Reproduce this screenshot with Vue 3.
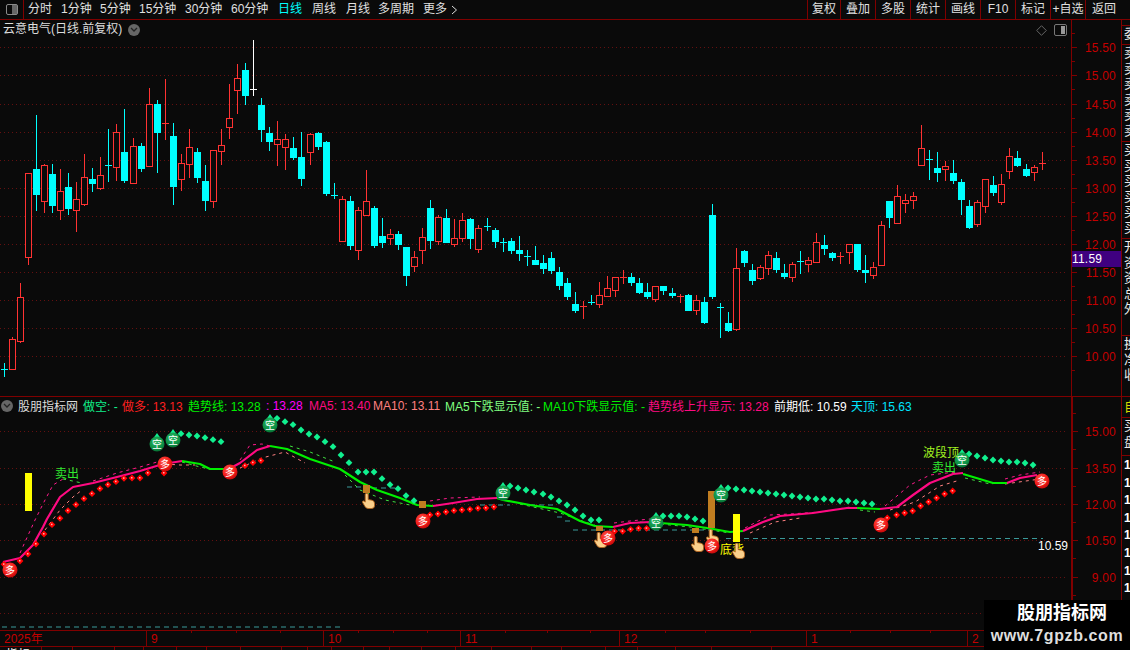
<script setup>
const navItems = [['分时',33],['1分钟',39],['5分钟',39],['15分钟',46],['30分钟',46],['60分钟',47],['日线',34],['周线',34],['月线',32],['多周期',45],['更多',28]]
const toolItems = [['复权',33],['叠加',35],['多股',35],['统计',35],['画线',35],['F10',35],['标记',35],['+自选',35],['返回',37]]

const rawA = `c 1000 1018 1022 1040|r 922 926 1018 1018|r 760 802 934 940|r 430 430 682 706|c 256 418 494 542|r 402 406 514 548|c 402 432 527 548|r 418 482 541 569|c 430 472 536 554|r 456 506 541 605|r 372 442 521 527|c 414 448 461 485|r 381 434 475 479|c 297 406 410 455|r 282 305 412 452|c 237 367 452 458|r 324 349 460 460|c 340 349 416 425|r 174 223 409 409|c 210 223 308 428|r 147 279 281 329|c 279 319 470 524|r 373 400 448 482|r 297 352 403 443|c 354 367 443 458|c 405 454 512 542|r 361 361 514 533|r 297 346 364 404|r 162 265 292 326|r 102 145 181 251|c 99 121 197 224|w 30 178 180 197|c 204 226 299 335|c 291 310 335 362|r 273 328 343 407|r 312 328 350 419|c 321 355 384 390|c 306 382 446 467|r 310 313 365 404|c 306 310 350 359|c 333 337 491 497|c 459 496 499 506|r 499 508 632 632|c 499 514 647 659|r 532 541 661 689|r 420 514 556 556|c 529 535 647 653`
const rawB = `c 144 198 218 233|r 178 193 205 224|c 184 193 224 239|c 231 231 317 347|r 243 262 287 305|r 175 202 241 281|c 90 114 212 236|r 136 142 214 224|c 117 145 218 218|r 147 205 223 230|r 130 151 205 215|c 145 148 206 236|r 166 175 238 248|c 144 168 170 182|c 175 181 215 233|c 205 216 218 245|c 205 214 242 251|c 198 240 251 272|c 240 258 260 287|c 228 271 284 284|c 255 280 296 311|c 247 265 302 311|c 292 307 347 359|c 324 340 380 389|c 366 403 422 428|r 394 409 412 446|c 375 396 400 406|r 336 376 403 413|r 318 355 379 379|r 322 322 361 380|r 300 322 325 341|c 309 322 338 347|c 324 340 368 371|c 339 367 380 386|r 349 349 388 395|c 349 349 362 374|c 354 370 377 383|r 372 379 382 398|c 372 376 422 422|r 376 391 421 434|c 381 397 458 461|c 102 136 380 386|c 400 412 418 503|c 426 460 482 485|r 234 295 478 482`
const rawC = `c 420 424 458 470|c 462 481 512 524|r 466 472 505 511|r 423 436 475 494|c 426 445 480 488|c 462 490 500 507|r 457 463 502 515|c 423 454 460 491|r 442 451 463 485|r 369 397 455 457|c 375 406 416 434|c 426 430 445 452|r 427 439 445 461|r 403 403 427 461|c 403 403 479 485|c 435 481 488 518|r 457 472 496 506|r 334 346 466 469|c 274 274 323 353|r 225 259 340 340|r 252 271 278 308|r 246 259 271 296|r 45 115 166 166|c 120 148 150 209|c 126 175 190 215|r 153 169 178 212|c 150 190 213 221|c 208 217 269 315|c 271 289 353 356|r 271 277 341 350|r 208 208 289 309|c 198 226 248 258|r 192 223 277 285|r 114 139 184 207|c 123 145 167 171|c 162 178 197 200|r 166 172 187 213|r 126 160 166 180`
const parseGroup = (raw, y0) => raw.split('|').map(s => {
  const p = s.split(' ')
  const [hi, top, bot, lo] = p.slice(1).map(v => Math.round(y0 + Number(v) / 3))
  return { k: p[0], hi, top, bot, lo }
})
const colors = { r: '#ff3232', c: '#00ffff', w: '#ffffff' }
const candles = [...parseGroup(rawA, 30), ...parseGroup(rawB, 170), ...parseGroup(rawC, 110)].map((c, i) => {
  const x = Math.floor(4.3 + 8.045 * i)
  const h = Math.max(c.bot - c.top, 1)
  return { ...c, x, h, color: colors[c.k], doji: h < 3 }
})

const priceGrid = [47, 75, 104, 132, 160, 188, 216, 244, 272, 300, 328, 356]
const priceLabels = ['15.50','15.00','14.50','14.00','13.50','13.00','12.50','12.00','11.50','11.00','10.50','10.00']
const indGrid = [431, 468, 504, 540, 577, 613]
const indLabels = ['15.00','13.50','12.00','10.50','9.00']
const toPts = a => a.map(p => p.join(',')).join(' ')

const trendRaw = [
  ['p', [[3,562],[20,558],[33,545],[43,527],[47,519],[60,497],[73,487],[93,483],[117,477],[140,471],[163,464],[182,461]]],
  ['g', [[182,461],[200,464],[210,469],[227,469]]],
  ['p', [[227,470],[240,463],[257,450],[270,446]]],
  ['g', [[270,446],[287,449],[310,459],[340,469],[360,482],[377,490],[400,498],[417,505],[433,506]]],
  ['p', [[433,506],[453,503],[477,499],[497,498]]],
  ['g', [[497,498],[503,500],[530,505],[557,509],[580,521],[595,526],[613,527]]],
  ['p', [[613,527],[630,523],[650,522]]],
  ['g', [[650,522],[660,523],[687,525],[707,528],[730,532],[743,531]]],
  ['p', [[743,531],[763,522],[780,516],[813,513],[847,508],[857,508]]],
  ['g', [[857,508],[880,509]]],
  ['p', [[880,509],[897,507],[913,495],[930,483],[953,474],[963,473]]],
  ['g', [[963,474],[983,480],[993,483],[1007,483]]],
  ['p', [[1007,483],[1020,478],[1037,475]]]
]
const trend = trendRaw.map(([k, pts]) => ({ color: k === 'p' ? '#ff0a82' : '#00f000', pts: toPts(pts) }))
const dashedRaw = [
  ['#ff1a8c', [[20,553],[35,520],[45,500],[53,485],[63,479]]],
  ['#ff1a8c', [[93,481],[117,473],[140,467],[157,462]]],
  ['#ff1a8c', [[240,460],[250,445],[262,444],[270,446]]],
  ['#ff1a8c', [[423,502],[450,498],[480,497]]],
  ['#ff1a8c', [[614,523],[630,521],[650,519]]],
  ['#ff1a8c', [[745,528],[770,515],[790,514],[820,512],[850,507]]],
  ['#ff1a8c', [[885,506],[910,485],[930,475],[955,472]]],
  ['#ff1a8c', [[1005,479],[1020,475],[1040,472]]],
  ['#ff8080', [[45,530],[60,510],[73,497],[82,490]]],
  ['#ff8080', [[165,464],[180,465],[195,465]]],
  ['#ff8080', [[240,468],[262,458],[285,452],[305,463]]],
  ['#ff8080', [[750,533],[775,522],[800,518]]],
  ['#ff8080', [[890,510],[915,502],[940,486],[960,480]]],
  ['#ff8080', [[1005,484],[1040,479]]],
  ['#40e040', [[63,479],[82,483]]],
  ['#40e040', [[182,462],[200,467],[215,470]]],
  ['#40e040', [[290,446],[310,452],[335,462]]],
  ['#40e040', [[345,475],[360,490],[385,500],[410,505]]],
  ['#40e040', [[520,504],[560,513],[585,522],[600,527]]],
  ['#40e040', [[640,522],[690,527],[730,533]]],
  ['#40e040', [[860,510],[875,512]]],
  ['#40e040', [[965,478],[990,484],[1005,482]]]
]
const dashed = dashedRaw.map(([color, pts]) => ({ color, pts: toPts(pts) }))
const tealDash = [
  [2,344,627],[726,1043,538.5],[347,367,487],[372,400,488],[480,510,505],[530,553,505],
  [557,563,517],[565,570,521],[573,713,530]
]

const z = (list, x0, y0) => list.map(([x, y]) => [x0 + x / 3, y0 + y / 3])
const redDots = [
  ...z([[180,385],[204,362],[228,344],[252,326],[276,311],[300,296],[324,284],[348,275],[372,265],[396,264],[420,264],[444,249],[492,249],[735,227],[759,218],[783,212],[1290,375],[1314,372],[1338,366],[1362,362],[1386,360],[1410,358],[1434,355]], 0, 390),
  ...z([[12,133],[60,123],[84,102],[108,72],[132,42],[156,14]], 0, 520),
  ...z([[18,354],[42,351],[404,424],[428,424],[452,418],[476,415],[500,415],[1222,384],[1250,375],[1274,369],[1298,363],[1322,348],[1346,336],[1370,324],[1394,312],[1418,303]], 480, 390)
]
const greenDots = [
  ...z([[543,131],[567,135],[591,138],[615,143],[639,149],[663,155],[831,85],[855,95],[879,104],[903,120],[927,132],[951,141],[975,155],[999,170],[1023,195],[1047,218],[1074,246],[1098,246],[1122,246],[1146,266],[1170,284],[1194,296],[1218,317],[1242,332]], 0, 390),
  ...z([[90,288],[114,294],[138,300],[162,306],[189,312],[213,321],[237,333],[261,345],[285,360],[309,378],[333,390],[357,390],[549,378],[573,378],[597,378],[621,381],[645,387],[669,393],[744,294],[768,297],[792,300],[816,303],[840,306],[864,309],[888,312],[912,315],[936,318],[960,321],[984,324],[1008,327],[1032,327],[1056,330],[1080,333],[1104,333],[1128,336],[1152,339],[1176,342]], 480, 390),
  ...z([[357,192],[381,198],[405,204],[429,210],[453,213],[477,216],[501,216],[525,219],[549,225]], 850, 390)
]
const diamond = ([x, y], r) => `${x},${y - r} ${x + r},${y} ${x},${y + r} ${x - r},${y}`
const redBadges = [[10,570],[165,464],[230,472],[423,521],[608,538],[712,546],[881,525],[1042,481]]
const greenBadges = [[157,444],[173,440],[270,425],[503,493],[656,523],[721,495],[962,460]]
const yellowBars = [[25,473,7,38],[733,514,7,28]]
const brownBars = [[363,485,7,8],[419,501,7,7],[596,526,7,5],[692,528,7,5],[708,491,7,37]]
const handsBelow = [[362,493],[594,532],[691,536],[706,529]]

const indicators = [
  { text: '做空: -', color: '#10f08a', w: 39 },
  { text: '做多: 13.13', color: '#ff2020', w: 66 },
  { text: '趋势线: 13.28', color: '#00f000', w: 78 },
  { text: ': 13.28', color: '#ff00ff', w: 43 },
  { text: 'MA5: 13.40', color: '#ff0a82', w: 64 },
  { text: 'MA10: 13.11', color: '#ff8080', w: 72 },
  { text: 'MA5下跌显示值: -', color: '#80ff80', w: 98 },
  { text: 'MA10下跌显示值: -', color: '#00f000', w: 105 },
  { text: '趋势线上升显示: 13.28', color: '#ff0a82', w: 126 },
  { text: '前期低: 10.59', color: '#ffffff', w: 77 },
  { text: '天顶: 15.63', color: '#00e6ff', w: 70 }
]

const months = [
  { label: '2025年', w: 147 }, { label: '9', w: 177 }, { label: '10', w: 137 },
  { label: '11', w: 159 }, { label: '12', w: 187 }, { label: '1', w: 161 }, { label: '2', w: 60 }
]
const minorTicks = [191,236,280,358,393,427,505,547,590,665,705,750,850,890,930]

const sideSections = [
  { h: 6, chars: '' }, { h: 19, chars: '委' }, { h: 97, chars: '卖卖卖卖卖卖' },
  { h: 97, chars: '买买买买买买' }, { h: 97, chars: '开资资总外' }, { h: 61, chars: '换净收' },
  { h: 21, chars: '自', gold: true }, { h: 38, chars: '买盘' }
]
const footCells = [42, 31, 42, 29, 33, 30, 34, 41, 26, 24, 32, 26, 32, 34, 36, 40, 30, 44, 32, 38, 36, 60]
</script>

<template>
  <div class="screen">
    <header class="toolbar">
      <div class="toggle-cell">
        <span class="toggle-icon"><i></i></span>
      </div>
      <nav class="nav">
        <span v-for="[item, w] in navItems" :key="item" class="nav-item" :class="{ active: item === '日线' }" :style="{ width: w + 'px' }">{{ item }}</span>
        <svg class="more-arrow" width="7" height="10" viewBox="0 0 7 10"><path d="M1 1l4.5 4L1 9" fill="none" stroke="#ddd" /></svg>
      </nav>
      <div class="tools">
        <span v-for="[item, w] in toolItems" :key="item" class="tool" :style="{ width: w + 'px' }">{{ item }}</span>
      </div>
    </header>

    <div class="workspace">
      <main class="charts">
        <section class="pane price-pane">
          <div class="plot">
            <svg class="plot-svg" width="1071" height="376" viewBox="0 20 1071 376">
              <line v-for="y in priceGrid" :key="y" class="grid" x1="0" x2="1068" :y1="y + 0.5" :y2="y + 0.5" />
              <g shape-rendering="crispEdges">
                <g v-for="(c, i) in candles" :key="i">
                  <rect :x="c.x" :y="c.hi" width="1" :height="c.lo - c.hi" :fill="c.color" />
                  <rect v-if="c.k === 'r' && !c.doji" :x="c.x - 3" :y="c.top" width="6" :height="c.h" fill="#0a0a0a" :stroke="c.color" />
                  <rect v-else :x="c.x - 3" :y="c.top" width="7" :height="c.doji ? 1 : c.h" :fill="c.color" />
                </g>
              </g>
            </svg>
            <div class="stock-title">
              <span>云意电气(日线.前复权)</span>
              <span class="chev-btn"><svg width="8" height="5" viewBox="0 0 8 5"><path d="M1 1l3 3 3-3" fill="none" stroke="#222" stroke-width="1.3" /></svg></span>
            </div>
            <div class="corner-icons">
              <svg width="11" height="11" viewBox="0 0 11 11"><path d="M5.5 .7L10.3 5.5 5.5 10.3 .7 5.5z" fill="none" stroke="#666" /></svg>
              <span class="panel-icon"><i></i></span>
            </div>
          </div>
          <div class="axis">
            <svg width="49" height="376" viewBox="1072 20 49 376">
              <g v-for="(y, i) in priceGrid" :key="y">
                <line class="tick" x1="1072" x2="1077" :y1="y + 0.5" :y2="y + 0.5" />
                <line class="tick" x1="1072" x2="1075" :y1="y + 14.5" :y2="y + 14.5" />
                <text class="axis-text" x="1116" :y="y + 5">{{ priceLabels[i] }}</text>
              </g>
              <line class="tick" x1="1072" x2="1075" y1="33.5" y2="33.5" />
            </svg>
            <div class="last-price">11.59</div>
          </div>
        </section>

        <section class="pane ind-pane">
          <div class="plot">
            <svg class="plot-svg" width="1071" height="233" viewBox="0 397 1071 233">
              <defs>
                <radialGradient id="redBall" cx="40%" cy="35%" r="70%">
                  <stop offset="0%" stop-color="#ff5a4a" />
                  <stop offset="65%" stop-color="#f01818" />
                  <stop offset="100%" stop-color="#b80808" />
                </radialGradient>
                <radialGradient id="greenBall" cx="45%" cy="35%" r="70%">
                  <stop offset="0%" stop-color="#2bb865" />
                  <stop offset="70%" stop-color="#0d8f45" />
                  <stop offset="100%" stop-color="#07602c" />
                </radialGradient>
                <symbol id="hand" viewBox="0 0 13 16">
                  <path d="M3.2 1q1.6-1.4 3 0v5.6l3.6.6q2.7.5 2.7 3v2.6q0 2.7-3 2.7H6.2q-2.2 0-3.2-2L.6 9.6q-.5-1.7 1-1.7l1.6 1.2z" fill="#fbd08c" stroke="#b5651d" stroke-width=".9" />
                </symbol>
              </defs>
              <line v-for="y in indGrid" :key="y" class="grid" x1="0" x2="1068" :y1="y + 0.5" :y2="y + 0.5" />
              <line v-for="(d, i) in tealDash" :key="'t' + i" class="teal" :x1="d[0]" :x2="d[1]" :y1="d[2]" :y2="d[2]" />
              <polyline v-for="(d, i) in dashed" :key="'d' + i" class="ma-dash" :points="d.pts" :stroke="d.color" />
              <polyline v-for="(s, i) in trend" :key="'s' + i" class="trend" :points="s.pts" :stroke="s.color" />
              <g v-for="(p, i) in redDots" :key="'r' + i">
                <polygon :points="diamond(p, 3.4)" fill="#ff0000" />
                <rect :x="p[0] - 1" :y="p[1] - 1" width="1.5" height="1.5" fill="#ffb0b0" />
              </g>
              <polygon v-for="(p, i) in greenDots" :key="'gd' + i" :points="diamond(p, 3.4)" fill="#10f08f" />
              <rect v-for="(b, i) in yellowBars" :key="'y' + i" :x="b[0]" :y="b[1]" :width="b[2]" :height="b[3]" fill="#ffff00" />
              <rect v-for="(b, i) in brownBars" :key="'b' + i" :x="b[0]" :y="b[1]" :width="b[2]" :height="b[3]" fill="#c07d20" />
              <use v-for="(h, i) in handsBelow" :key="'h' + i" href="#hand" :x="h[0]" :y="h[1]" width="13" height="16" />
              <g v-for="(p, i) in redBadges" :key="'rb' + i">
                <circle :cx="p[0]" :cy="p[1]" r="7.5" fill="url(#redBall)" />
                <text class="badge-text" :x="p[0]" :y="p[1] + 4">多</text>
              </g>
              <g v-for="(p, i) in greenBadges" :key="'gb' + i">
                <polygon :points="`${p[0] - 3.5},${p[1] - 6} ${p[0]},${p[1] - 11} ${p[0] + 3.5},${p[1] - 6}`" fill="#10f08f" />
                <circle :cx="p[0]" :cy="p[1]" r="7.5" fill="url(#greenBall)" />
                <text class="badge-text" :x="p[0]" :y="p[1] + 4">空</text>
              </g>
              <text class="sig green" x="55" y="478">卖出</text>
              <text class="sig lime" x="923" y="457">波段顶</text>
              <text class="sig green" x="932" y="472">卖出</text>
              <text class="sig yellow" x="720" y="554">底背</text>
              <use href="#hand" x="732" y="543" width="13" height="16" />
              <text class="low-val" x="1038" y="550">10.59</text>
            </svg>
            <div class="ind-head">
              <span class="chev-btn small"><svg width="8" height="5" viewBox="0 0 8 5"><path d="M1 1l3 3 3-3" fill="none" stroke="#222" stroke-width="1.3" /></svg></span>
              <span class="ind-name">股朋指标网</span>
              <span v-for="d in indicators" :key="d.text" class="ind-val" :style="{ width: d.w + 'px', color: d.color }">{{ d.text }}</span>
            </div>
          </div>
          <div class="axis thick">
            <svg width="48" height="233" viewBox="1073 397 48 233">
              <g v-for="(y, i) in indGrid" :key="y">
                <line class="tick" x1="1073" x2="1078" :y1="y + 0.5" :y2="y + 0.5" />
                <line class="tick" x1="1073" x2="1076" :y1="y + 18.5" :y2="y + 18.5" />
                <text v-if="indLabels[i]" class="axis-text" x="1116" :y="y + 5">{{ indLabels[i] }}</text>
              </g>
              <line class="tick" x1="1073" x2="1076" y1="413.5" y2="413.5" />
            </svg>
          </div>
        </section>

        <section class="date-axis">
          <span v-for="m in months" :key="m.label" class="month" :style="{ width: m.w + 'px' }">{{ m.label }}</span>
          <svg class="minor-ticks" width="1121" height="3">
            <line v-for="x in minorTicks" :key="x" :x1="x + 0.5" :x2="x + 0.5" y1="0" y2="2" stroke="#800000" />
          </svg>
        </section>

        <footer class="foot">
          <span v-for="(w, i) in footCells" :key="i" class="foot-cell" :style="{ width: w + 'px' }">{{ i === 0 ? '指标' : '' }}</span>
        </footer>
      </main>

      <aside class="side">
        <div v-for="(s, i) in sideSections" :key="i" class="side-sec" :class="{ gold: s.gold }" :style="{ height: s.h + 'px' }">
          <span v-for="(ch, j) in s.chars" :key="j" class="side-ch">{{ ch }}</span>
        </div>
        <div class="side-nums">
          <span v-for="n in 8" :key="n" class="side-num">13.{{ 10 + n }}</span>
        </div>
      </aside>
    </div>

    <div class="watermark">
      <span class="wm-top">股朋指标网</span>
      <span class="wm-url">www.7gpzb.com</span>
    </div>
  </div>
</template>

<style>
html, body { margin: 0; padding: 0; background: #0a0a0a; }
</style>

<style scoped>
.screen {
  position: relative;
  width: 1130px;
  height: 650px;
  overflow: hidden;
  background: #0a0a0a;
  display: flex;
  flex-direction: column;
  font-family: "Liberation Sans", "Noto Sans CJK SC", sans-serif;
  font-size: 12px;
  color: #e0e0e0;
}
.toolbar {
  height: 19px;
  flex: none;
  display: flex;
  align-items: stretch;
  border-bottom: 1px solid #800000;
  line-height: 19px;
}
.toggle-cell {
  width: 23px;
  flex: none;
  border-right: 1px solid #800000;
  display: flex;
  align-items: center;
  justify-content: center;
}
.toggle-icon {
  width: 10px;
  height: 9px;
  border: 1px solid #8a8a8a;
  border-radius: 2px;
  display: flex;
  justify-content: flex-end;
}
.toggle-icon i { width: 5px; background: #666; }
.nav {
  display: flex;
  align-items: center;
  margin-left: 4px;
  flex: 1;
  height: 19px;
}
.nav-item { white-space: nowrap; flex: none; }
.nav-item.active { color: #00ffff; }
.more-arrow { flex: none; }
.tools { display: flex; margin-right: 8px; }
.tool {
  box-sizing: border-box;
  text-align: center;
  border-left: 1px solid #800000;
  white-space: nowrap;
}
.workspace { flex: 1; display: flex; min-height: 0; }
.charts {
  width: 1121px;
  flex: none;
  display: flex;
  flex-direction: column;
}
.pane { display: flex; border-bottom: 1px solid #800000; flex: none; }
.price-pane { height: 376px; }
.ind-pane { height: 233px; }
.plot { position: relative; width: 1071px; flex: none; }
.plot-svg { display: block; }
.axis { position: relative; flex: 1; border-left: 1px solid #800000; }
.axis svg { display: block; }
.axis.thick { border-left-width: 2px; }
.grid { stroke: #641010; stroke-width: 1; stroke-dasharray: 1 3; }
.tick { stroke: #800000; stroke-width: 1; }
.axis-text { fill: #c40000; font-size: 12px; text-anchor: end; letter-spacing: .2px; }
.last-price {
  position: absolute;
  left: 0;
  top: 231px;
  width: 100%;
  height: 16px;
  line-height: 16px;
  background: #3f0080;
  color: #fff;
  letter-spacing: .2px;
}
.stock-title {
  position: absolute;
  left: 3px;
  top: 2px;
  display: flex;
  align-items: center;
  gap: 6px;
  line-height: 15px;
  color: #dcdcdc;
  white-space: nowrap;
}
.chev-btn {
  width: 12px;
  height: 12px;
  border-radius: 50%;
  background: #666;
  display: flex;
  align-items: center;
  justify-content: center;
  flex: none;
}
.corner-icons {
  position: absolute;
  right: 4px;
  top: 4px;
  display: flex;
  align-items: center;
  gap: 7px;
}
.panel-icon {
  width: 9px;
  height: 8px;
  border: 1px solid #777;
  border-radius: 2px;
  display: flex;
  justify-content: flex-end;
  padding: 1px;
}
.panel-icon i { width: 4px; background: #999; }
.ind-head {
  position: absolute;
  left: 1px;
  top: 1px;
  display: flex;
  align-items: center;
  height: 15px;
  white-space: nowrap;
}
.ind-name { width: 65px; margin-left: 5px; color: #dcdcdc; flex: none; }
.ind-val { flex: none; }
.trend { fill: none; stroke-width: 2.2; stroke-linejoin: round; }
.ma-dash { fill: none; stroke-width: 1; stroke-dasharray: 3 4; }
.teal { stroke: #3a9a9a; stroke-width: 1; stroke-dasharray: 5 4; }
.badge-text { fill: #fff; font-size: 10px; text-anchor: middle; }
.sig { font-size: 12px; }
.sig.green { fill: #30e830; }
.sig.lime { fill: #a0f020; }
.sig.yellow { fill: #ffff00; }
.low-val { fill: #fff; font-size: 12px; }
.date-axis {
  position: relative;
  height: 15px;
  flex: none;
  display: flex;
  border-bottom: 1px solid #800000;
  line-height: 16px;
  color: #c40000;
}
.month {
  box-sizing: border-box;
  flex: none;
  padding-left: 4px;
  border-right: 1px solid #800000;
  white-space: nowrap;
}
.month:last-of-type { border-right: 0; }
.minor-ticks { position: absolute; left: 0; top: 0; }
.foot { display: flex; flex: 1; overflow: hidden; }
.foot-cell {
  box-sizing: border-box;
  flex: none;
  border-right: 1px solid #800000;
  padding: 1px 0 0 6px;
  color: #fff;
  line-height: 14px;
}
.side {
  flex: 1;
  border-left: 1px solid #800000;
  overflow: hidden;
  display: flex;
  flex-direction: column;
}
.side-sec {
  box-sizing: border-box;
  flex: none;
  border-bottom: 1px solid #800000;
  overflow: hidden;
  display: flex;
  flex-direction: column;
  padding-left: 2px;
  font-size: 13px;
  line-height: 15.5px;
  color: #e8e8e8;
}
.side-sec.gold { color: #d8d800; line-height: 20px; }
.side-ch { display: block; white-space: nowrap; }
.side-nums { display: flex; flex-direction: column; padding: 1px 0 0 2px; }
.side-num { height: 17.6px; line-height: 17.6px; font-size: 12px; font-weight: 700; color: #fff; white-space: nowrap; }
.watermark {
  position: absolute;
  left: 984px;
  top: 600px;
  width: 146px;
  height: 50px;
  background: #000;
  display: flex;
  flex-direction: column;
  align-items: center;
  color: #fff;
  font-weight: 700;
}
.wm-top { font-size: 18px; line-height: 27px; margin-left: 10px; }
.wm-url { font-size: 16px; line-height: 17px; letter-spacing: .6px; color: #dedede; }
</style>
